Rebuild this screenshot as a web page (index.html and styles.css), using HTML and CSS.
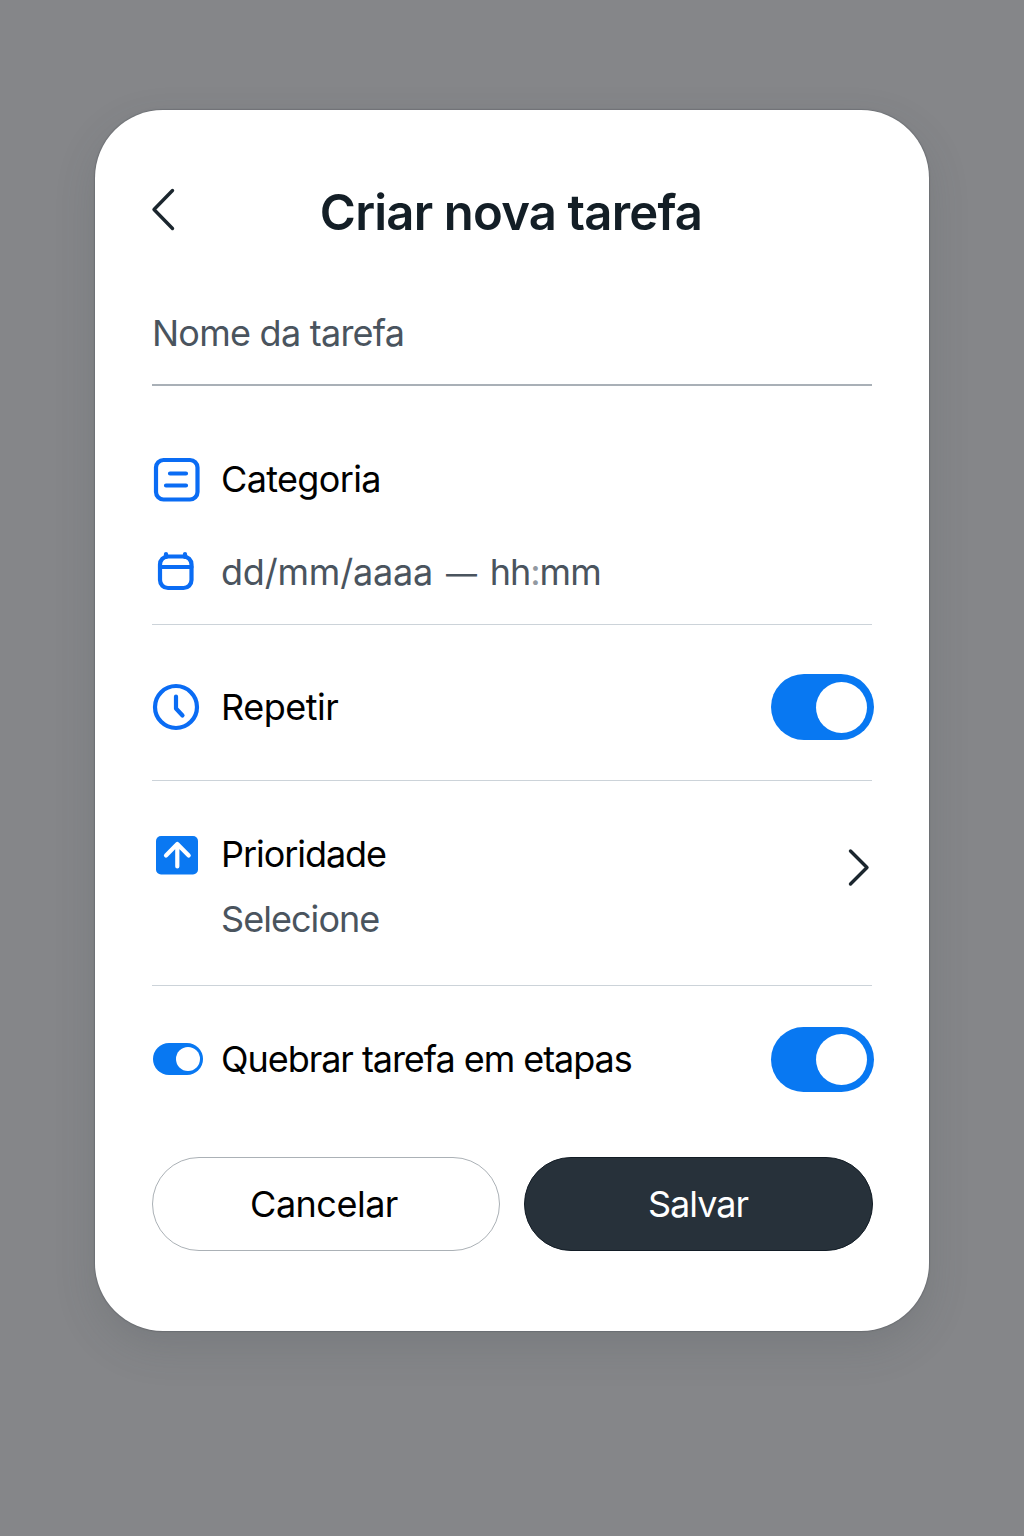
FILE: index.html
```html
<!DOCTYPE html>
<html lang="pt-BR">
<head>
<meta charset="utf-8">
<title>Criar nova tarefa</title>
<link rel="stylesheet" href="styles.css">
</head>
<body>
<main class="card">
  <header class="header">
    <svg class="back" width="28" height="46" viewBox="0 0 28 46"><path d="M23.500 3.500 5 22.500l18.500 19"/></svg>
    <h1 class="title">Criar nova tarefa</h1>
  </header>
  <div class="field"><span class="text t-name">Nome da tarefa</span></div>
  <div class="row category">
    <svg class="icon" width="69" height="48" viewBox="0 0 69 48"><rect x="4" y="5" width="41.500" height="39.500" rx="7.500"/><path d="M18 18.500h16M14 30.500h20"/></svg>
    <span class="text t-category">Categoria</span>
  </div>
  <div class="row date">
    <svg class="icon" width="69" height="48" viewBox="0 0 69 48"><rect x="8" y="7.500" width="31.500" height="31.500" rx="8"/><path d="M8 18h31.500M14 5v3M33 5v3"/></svg>
    <span class="text t-date">dd/mm/aaaa <span class="dash">—</span> <span class="time">hh<span class="colon">:</span>mm</span></span>
  </div>
  <div class="row repeat">
    <svg class="icon" width="69" height="48" viewBox="0 0 69 48"><circle cx="24" cy="24" r="21"/><path d="M24 13.500v12l6.500 7"/></svg>
    <span class="text t-repeat">Repetir</span>
    <span class="switch"></span>
  </div>
  <div class="row priority">
    <svg class="icon" width="69" height="48" viewBox="0 0 69 48"><rect class="solid" x="4" y="5" width="42" height="38.500" rx="5"/><path class="arrow" d="M25.300 35.500V13M14 24.500 25.300 13l11.400 11.500"/></svg>
    <div class="stack">
      <span class="text t-priority">Prioridade</span>
      <span class="text t-select">Selecione</span>
    </div>
    <svg class="next" width="28" height="42" viewBox="0 0 28 42"><path d="M6.500 5 23 21.500 6.500 38"/></svg>
  </div>
  <div class="row steps">
    <span class="mini-slot"><span class="switch mini"></span></span>
    <span class="text t-steps">Quebrar tarefa em etapas</span>
    <span class="switch"></span>
  </div>
  <div class="actions">
    <button class="button cancel"><span class="text t-cancel">Cancelar</span></button>
    <button class="button save"><span class="text t-save">Salvar</span></button>
  </div>
</main>
</body>
</html>
```
FILE: styles.css
```css
* { box-sizing: border-box; }
body {
  margin: 0;
  min-height: 1536px;
  padding: 110px 0 0 95px;
  background: #858689;
  font-family: Inter, "Liberation Sans", sans-serif;
  color: #000;
}
.card {
  width: 834px;
  height: 1221px;
  padding: 0 56px 0 57px;
  border-radius: 68px;
  background: #fff;
  box-shadow: 0 0 1px 1px rgba(60, 65, 70, .25), 0 16px 40px rgba(60, 70, 75, .17);
}
.header {
  display: grid;
  grid-template-columns: 28px 1fr 28px;
  align-items: center;
  height: 204px;
}
.back { margin: -5px 0 0 -3px; }
.back path, .next path {
  fill: none;
  stroke: #1b262e;
  stroke-width: 3.4;
  stroke-linecap: round;
  stroke-linejoin: round;
}
.title {
  margin: 1px 0 0 -3px;
  font-size: 49px;
  font-weight: 600;
  letter-spacing: -.8px;
  line-height: 60px;
  text-align: center;
  white-space: nowrap;
  color: #131e26;
}
.text {
  font-size: 36px;
  line-height: 44px;
  white-space: nowrap;
}
.field {
  display: flex;
  align-items: flex-end;
  width: 720px;
  height: 72px;
  padding-bottom: 29px;
  border-bottom: 2px solid #a9b0b7;
}
.t-name, .t-date, .t-select { color: #4a545e; }
.t-name { letter-spacing: -.75px; }
.t-category { letter-spacing: -.65px; }
.t-date { letter-spacing: -.2px; }
.t-date .dash { margin: 0 2px 0 3px; font-size: 31px; }
.t-date .time { margin-left: 1px; letter-spacing: -1px; }
.t-repeat { letter-spacing: -.5px; }
.t-priority { letter-spacing: -1.05px; }
.t-select { letter-spacing: -.95px; }
.t-steps { letter-spacing: -1.05px; }
.t-cancel { margin-right: 4px; letter-spacing: -.5px; }
.t-save { margin-right: 1px; letter-spacing: -1px; }
.row {
  display: flex;
  align-items: center;
}
.row .text { flex: none; }
.date, .repeat, .priority {
  width: 720px;
  border-bottom: 1px solid #ccd3d9;
}
.category { height: 92px; margin-top: 47px; }
.date { height: 100px; padding-bottom: 3px; }
.repeat { height: 156px; padding-top: 9px; }
.priority { height: 205px; padding-top: 50px; align-items: flex-start; }
.steps { height: 146px; }
.icon {
  flex: none;
  fill: none;
  stroke: #0a6cf4;
  stroke-width: 4.2;
  stroke-linecap: round;
  stroke-linejoin: round;
}
.icon .solid { fill: #0a78f2; stroke: none; }
.icon .arrow { stroke: #fff; }
.stack {
  display: flex;
  flex-direction: column;
  gap: 21px;
  padding-top: 1px;
}
.next { margin: 15px 0 0 auto; }
.colon { color: #9299a1; }
.switch {
  display: flex;
  justify-content: flex-end;
  align-items: center;
  flex: none;
  width: 103px;
  height: 66px;
  margin: 0 -2px 0 auto;
  padding-right: 7px;
  border-radius: 33px;
  background: #0878f2;
}
.steps > .switch { height: 65px; margin: 1px -1px 0 auto; }
.switch::after {
  content: "";
  width: 51px;
  height: 51px;
  border-radius: 50%;
  background: #fff;
}
.mini-slot { width: 69px; }
.switch.mini {
  width: 50px;
  height: 32px;
  margin: 0 0 0 1px;
  padding-right: 3px;
}
.mini::after { width: 24px; height: 24px; }
.actions {
  display: grid;
  grid-template-columns: 348px 349px;
  gap: 24px;
  margin-top: 25px;
}
.button {
  height: 94px;
  padding: 0;
  border: 0;
  border-radius: 47px;
  font-family: inherit;
}
.cancel { border: 1.500px solid #abb1b6; background: #fff; color: #000; }
.save { background: #27313a; border: 1px solid #121c25; color: #fff; }
```
